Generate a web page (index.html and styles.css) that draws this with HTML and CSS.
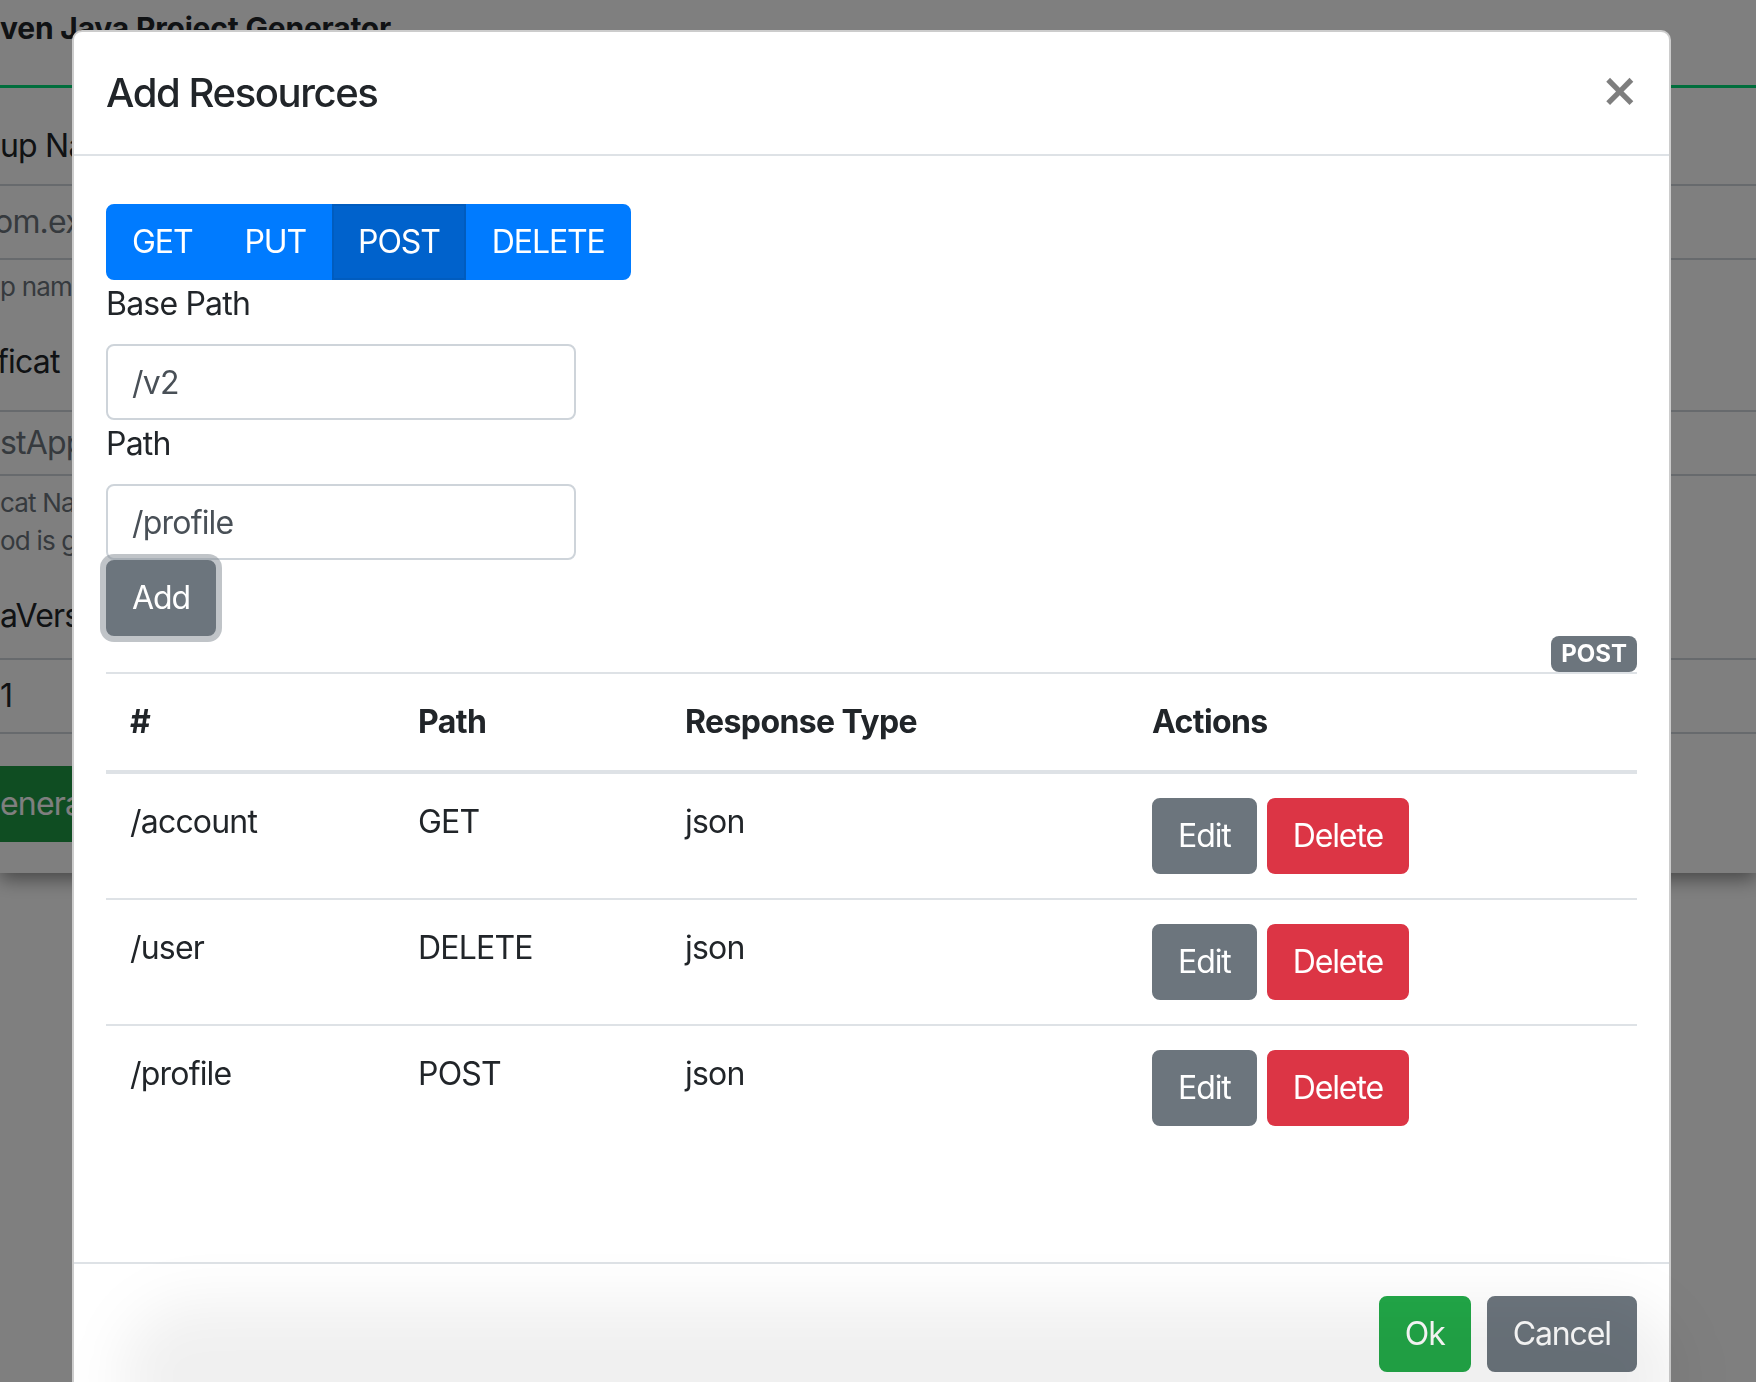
FILE: index.html
```html
<!DOCTYPE html>
<html lang="en">
<head>
<meta charset="utf-8">
<title>Add Resources</title>
<link rel="stylesheet" href="styles.css">
</head>
<body>
<div class="page">
  <div class="bg-title">ven Java Project Generator</div>
  <div class="bg-rule"></div>
  <div class="bg-label bg-l1">up Name</div>
  <div class="bg-input bg-i1 bg-placeholder">om.example</div>
  <div class="bg-help bg-h1">p name</div>
  <div class="bg-label bg-l2">ficat</div>
  <div class="bg-input bg-i2 bg-placeholder">stApp</div>
  <div class="bg-help bg-h2">cat Name<br>od is g</div>
  <div class="bg-label bg-l3">aVersion</div>
  <div class="bg-input bg-i3">1</div>
  <div class="bg-button">enerate</div>
</div>
<div class="backdrop"></div>
<div class="modal">
  <div class="modal-content">
    <div class="modal-header">
      <h5 class="modal-title">Add Resources</h5>
      <button class="close" type="button">&times;</button>
    </div>
    <div class="modal-body">
      <div class="btn-group">
        <button class="btn btn-primary" type="button">GET</button>
        <button class="btn btn-primary" type="button">PUT</button>
        <button class="btn btn-primary active" type="button">POST</button>
        <button class="btn btn-primary" type="button">DELETE</button>
      </div>
      <label class="form-label">Base Path</label>
      <input class="form-control" type="text" value="/v2">
      <label class="form-label">Path</label>
      <input class="form-control" type="text" value="/profile">
      <div class="add-row"><button class="btn btn-secondary btn-focus" type="button">Add</button></div>
      <div class="badge-row"><span class="badge">POST</span></div>
      <table class="table">
        <colgroup>
          <col class="col-a">
          <col class="col-b">
          <col class="col-c">
          <col class="col-d">
        </colgroup>
        <thead>
          <tr><th>#</th><th>Path</th><th>Response Type</th><th>Actions</th></tr>
        </thead>
        <tbody>
          <tr>
            <td>/account</td><td>GET</td><td>json</td>
            <td class="actions"><button class="btn btn-secondary" type="button">Edit</button><button class="btn btn-danger" type="button">Delete</button></td>
          </tr>
          <tr>
            <td>/user</td><td>DELETE</td><td>json</td>
            <td class="actions"><button class="btn btn-secondary" type="button">Edit</button><button class="btn btn-danger" type="button">Delete</button></td>
          </tr>
          <tr>
            <td>/profile</td><td>POST</td><td>json</td>
            <td class="actions"><button class="btn btn-secondary" type="button">Edit</button><button class="btn btn-danger" type="button">Delete</button></td>
          </tr>
        </tbody>
      </table>
    </div>
    <div class="modal-footer">
      <button class="btn btn-success" type="button">Ok</button>
      <button class="btn btn-secondary" type="button">Cancel</button>
    </div>
  </div>
</div>
<div class="shade"></div>
</body>
</html>
```

FILE: styles.css
```css
* { box-sizing: border-box; }

html, body {
  margin: 0;
  height: 100%;
  overflow: hidden;
}

body {
  font-family: Inter, "Noto Sans", "Liberation Sans", sans-serif;
  font-size: 32px;
  line-height: 1.5;
  letter-spacing: -0.8px;
  color: #212529;
  background: #fff;
}

/* ---------- background application page ---------- */
.page {
  height: 873px;
  background: #fff;
  box-shadow: 0 6px 18px rgba(0, 0, 0, 0.45);
  display: flex;
  flex-direction: column;
  white-space: nowrap;
  overflow: hidden;
  position: relative;
}

.bg-title {
  height: 56px;
  line-height: 56px;
  font-size: 30px;
  font-weight: 700;
  letter-spacing: -0.2px;
  flex-shrink: 0;
}

.bg-rule {
  margin-top: 29px;
  height: 3px;
  background: #00dc78;
  flex-shrink: 0;
}

.bg-label {
  height: 48px;
  line-height: 48px;
  flex-shrink: 0;
}

.bg-l1 { margin-top: 34px; }
.bg-l2 { margin-top: 32px; margin-left: -3px; }
.bg-l3 { margin-top: 32px; }

.bg-input {
  flex-shrink: 0;
  border-top: 2px solid #ced4da;
  border-bottom: 2px solid #ced4da;
  display: flex;
  align-items: center;
}

.bg-i1 { margin-top: 14px; height: 76px; margin-left: -6px; }
.bg-i2 { margin-top: 24px; height: 66px; }
.bg-i3 { margin-top: 18px; height: 76px; }

.bg-placeholder { color: #6c757d; }

.bg-help {
  margin-top: 8px;
  font-size: 26px;
  line-height: 38px;
  color: #6c757d;
  flex-shrink: 0;
}

.bg-button {
  margin-top: 32px;
  height: 76px;
  line-height: 76px;
  background: #1f9a45;
  color: #fff;
  width: 90px;
  flex-shrink: 0;
}

.backdrop {
  position: fixed;
  inset: 0;
  background: rgba(0, 0, 0, 0.5);
}

/* ---------- modal ---------- */
.modal {
  position: fixed;
  top: 30px;
  left: 72px;
  width: 1599px;
}

.modal-content {
  background: #fff;
  border: 2px solid rgba(0, 0, 0, 0.2);
  border-radius: 10px;
}

.modal-header {
  display: flex;
  align-items: flex-start;
  justify-content: space-between;
  padding: 31px 32px;
  border-bottom: 2px solid #dee2e6;
}

.modal-title {
  margin: 0;
  font-size: 40px;
  line-height: 60px;
  font-weight: 500;
  letter-spacing: -1.4px;
}

.close {
  padding: 36px 30px 28px;
  margin: -32px -32px -32px auto;
  background: transparent;
  border: 0;
  font-family: "DejaVu Sans", sans-serif;
  font-size: 46px;
  font-weight: 700;
  line-height: 1;
  letter-spacing: 0;
  color: #000;
  opacity: 0.5;
}

.modal-body {
  padding: 32px;
}

.btn {
  display: inline-block;
  font-family: inherit;
  font-size: 32px;
  font-weight: 400;
  line-height: 48px;
  letter-spacing: -1.1px;
  padding: 12px 24px;
  border: 2px solid transparent;
  border-radius: 8px;
  color: #fff;
  text-align: center;
  vertical-align: middle;
}

.btn-primary { background: #007bff; border-color: #007bff; }
.btn-primary.active { background: #0062cc; border-color: #005cbf; }
.btn-secondary { background: #6c757d; border-color: #6c757d; }
.btn-danger { background: #dc3545; border-color: #dc3545; }
.btn-success { background: #22a848; border-color: #22a848; }

.btn-group {
  display: flex;
  width: max-content;
  margin-top: 16px;
}

.btn-group .btn { border-radius: 0; }
.btn-group .btn:first-child { border-radius: 8px 0 0 8px; }
.btn-group .btn:last-child { border-radius: 0 8px 8px 0; }

.form-label {
  display: block;
  margin-bottom: 16px;
  line-height: 48px;
}

.form-control {
  display: block;
  width: 470px;
  height: 76px;
  padding: 12px 24px;
  font-family: inherit;
  font-size: 32px;
  line-height: 48px;
  letter-spacing: -0.8px;
  color: #495057;
  background: #fff;
  border: 2px solid #ced4da;
  border-radius: 8px;
}

.add-row { display: flex; }

.btn-focus {
  box-shadow: 0 0 0 6px rgba(130, 138, 145, 0.5);
}

.badge-row {
  display: flex;
  justify-content: flex-end;
}

.badge {
  display: inline-block;
  font-size: 24px;
  font-weight: 700;
  line-height: 1;
  letter-spacing: 0;
  padding: 6px 10px;
  border-radius: 8px;
  background: #6c757d;
  color: #fff;
}

/* ---------- table ---------- */
.table {
  width: 100%;
  border-collapse: collapse;
  table-layout: fixed;
  margin-bottom: 80px;
}

.col-a { width: 288px; }
.col-b { width: 267px; }
.col-c { width: 467px; }

.table th,
.table td {
  padding: 24px;
  border-top: 2px solid #dee2e6;
  vertical-align: top;
  text-align: left;
  line-height: 48px;
}

.table thead th {
  vertical-align: bottom;
  border-bottom: 4px solid #dee2e6;
  font-weight: 700;
  letter-spacing: -0.6px;
}

.actions { white-space: nowrap; }
.actions .btn + .btn { margin-left: 10px; }

/* ---------- footer ---------- */
.modal-footer {
  display: flex;
  justify-content: flex-end;
  align-items: center;
  padding: 24px;
  border-top: 2px solid #dee2e6;
}

.modal-footer .btn { margin: 8px; }

.shade {
  position: fixed;
  left: 120px;
  width: 1560px;
  bottom: -70px;
  height: 150px;
  border-radius: 80px;
  background: rgba(0, 0, 0, 0.06);
  filter: blur(28px);
  pointer-events: none;
}
```
